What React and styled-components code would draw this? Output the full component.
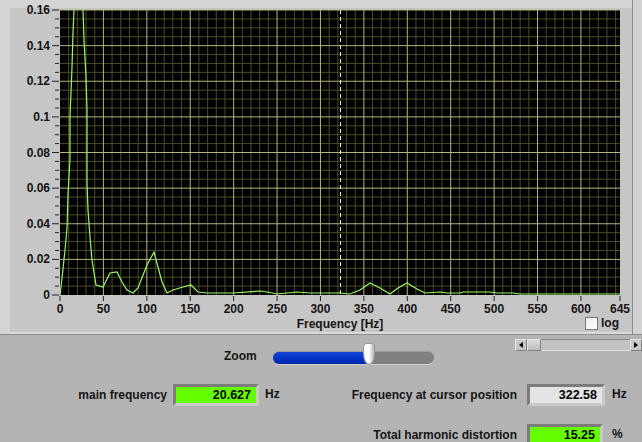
import React from "react";
import styled, { createGlobalStyle } from "styled-components";

const PL = 60;
const PT = 10;
const PW = 560;
const PH = 285;
const FMAX = 645;
const VMAX = 0.16;

const xAt = (hz) => PL + (hz / FMAX) * PW;
const yAt = (v) => PT + PH - (v / VMAX) * PH;

// spectrum trace, picked off the reference in pixel coordinates
const trace = [
  [60, 295], [62, 278], [65, 250], [67, 228], [68, 195], [70, 158], [70, 117],
  [72, 67], [73, 33], [74, 10], [78, -120], [83, 10], [84, 40], [86, 77],
  [87, 110], [87, 183], [88, 210], [90, 237], [92, 260], [96, 285], [103, 287],
  [110, 273], [117, 272], [122, 282], [127, 290], [133, 293], [138, 288],
  [147, 265], [154, 252], [158, 267], [162, 282], [167, 293], [173, 290],
  [183, 287], [191, 285], [198, 292], [207, 293], [233, 293], [260, 291],
  [267, 292], [277, 294], [297, 292], [310, 293], [333, 293], [340, 293],
  [350, 294], [360, 290], [370, 283], [380, 288], [390, 294], [398, 288],
  [407, 283], [417, 289], [425, 293], [440, 292], [447, 293], [460, 293],
  [463, 292], [490, 292], [497, 293], [513, 293], [520, 294], [620, 294],
];

const GlobalStyle = createGlobalStyle`
  html, body {
    margin: 0;
    padding: 0;
    background: #b4b4b4;
    overflow: hidden;
  }
  body {
    font-family: "Liberation Sans", Arial, sans-serif;
    font-weight: bold;
    font-size: 12px;
    color: #141414;
  }
`;

const Screen = styled.div`
  width: 642px;
  height: 442px;
  display: flex;
  flex-direction: column;
  overflow: hidden;
`;

const TopArea = styled.div`
  display: flex;
  background: #d2d2d2;
  box-shadow: 0 1px 0 #8c8c8c;
`;

const GraphPanel = styled.div`
  width: 632px;
  height: 334px;
  flex-shrink: 0;
  display: flex;
  flex-direction: column;
  background: #c6c6c6;
  border-right: 1px solid #8c8c8c;
  box-shadow: inset 10px 8px 0 #d4d4d4, inset 0 -2px 0 #dadada;
`;

const ChartSvg = styled.svg`
  display: block;
  overflow: visible;
  font-family: "Liberation Sans", Arial, sans-serif;
  font-weight: bold;
  font-size: 12px;
`;

const ChartFooter = styled.div`
  display: grid;
  grid-template-columns: 60px 525px 35px 12px;
  height: 17px;
`;

const AxisTitle = styled.div`
  grid-column: 2 / 4;
  grid-row: 1;
  text-align: center;
  line-height: 17px;
`;

const LogToggle = styled.label`
  grid-column: 3 / 5;
  grid-row: 1;
  display: flex;
  align-items: center;
  gap: 3px;
  margin-top: -3px;
`;

const CheckBox = styled.span`
  width: 11px;
  height: 11px;
  border: 1px solid #7a7a7a;
  background: linear-gradient(135deg, #e8ecf2, #ffffff);
`;

const ControlsRow = styled.div`
  display: flex;
  align-items: flex-start;
  height: 33px;
`;

const ZoomGroup = styled.div`
  display: flex;
  align-items: center;
  gap: 16px;
  margin: 11px 0 0 224px;
  height: 21px;
`;

const SliderTrack = styled.div`
  position: relative;
  width: 161px;
  height: 12px;
  margin-top: 4px;
  border-radius: 6px;
  background: #808080;
  box-shadow: 0 1px 0 #d0d0d0, 0 -1px 0 #9a9a9a;
`;

const SliderFill = styled.div`
  height: 100%;
  border-radius: 6px 0 0 6px;
  background: linear-gradient(#1446d8, #0030c0 60%, #0028a8);
`;

const SliderThumb = styled.div`
  position: absolute;
  top: -8px;
  width: 10px;
  height: 20px;
  margin-left: -5px;
  border-radius: 3px 3px 5px 5px / 3px 3px 10px 10px;
  background: linear-gradient(90deg, #f4f4f4, #ffffff 50%, #b8b8b8);
  box-shadow: 0 0 0 1px #9a9a9a;
`;

const ScrollBar = styled.div`
  display: flex;
  margin: 5px 0 0 auto;
  width: 127px;
  height: 12px;
`;

const ScrollButton = styled.div`
  width: 12px;
  height: 12px;
  box-sizing: border-box;
  display: flex;
  align-items: center;
  justify-content: center;
  background: #c8c8c8;
  border: 1px solid;
  border-color: #e6e6e6 #808080 #808080 #e6e6e6;
`;

const Arrow = styled.span`
  width: 0;
  height: 0;
  border-top: 3px solid transparent;
  border-bottom: 3px solid transparent;
  ${(p) =>
    p.$dir === "left"
      ? "border-right: 4px solid #000;"
      : "border-left: 4px solid #000;"}
`;

const ScrollThumb = styled(ScrollButton)`
  width: 14px;
  background: linear-gradient(#dcdcdc, #bcbcbc);
`;

const ScrollTrack = styled.div`
  flex: 1;
  box-sizing: border-box;
  background: #c2c2c2;
  border-top: 1px solid #8a8a8a;
  border-bottom: 1px solid #e0e0e0;
`;

const Readouts = styled.div`
  display: grid;
  grid-template-columns: 330px 1fr;
  row-gap: 18px;
  margin-top: 18px;
`;

const Readout = styled.div`
  grid-column: ${(p) => p.$col};
  display: flex;
  align-items: center;
`;

const ReadoutLabel = styled.span`
  width: ${(p) => p.$w}px;
  text-align: right;
  white-space: nowrap;
`;

const ValueBox = styled.div`
  box-sizing: border-box;
  width: ${(p) => p.$w}px;
  height: 22px;
  margin-left: ${(p) => p.$gap}px;
  padding-right: 5px;
  text-align: right;
  line-height: 16px;
  font-size: 12.5px;
  color: #000;
  background: ${(p) => (p.$lit ? "#66ff00" : "#e4e4e4")};
  border: 3px solid;
  border-color: #7c7c7c #cacaca #cacaca #7c7c7c;
`;

const Unit = styled.span`
  margin-left: ${(p) => p.$gap}px;
  margin-top: -2px;
`;

function Spectrum() {
  const minorX = [];
  for (let hz = 10; hz < FMAX; hz += 10) if (hz % 50) minorX.push(hz);
  const majorX = [];
  for (let hz = 50; hz <= 600; hz += 50) majorX.push(hz);
  const minorY = [];
  for (let i = 1; i < 32; i++) if (i % 4) minorY.push(i * 0.005);
  const majorY = [];
  for (let i = 1; i <= 8; i++) majorY.push(i * 0.02);
  const xLabels = [...majorX.map((h) => [h, String(h)]), [0, "0"], [645, "645"]];
  const yLabels = ["0", "0.02", "0.04", "0.06", "0.08", "0.1", "0.12", "0.14", "0.16"];

  return (
    <ChartSvg width="632" height="316">
      <defs>
        <clipPath id="plot">
          <rect x={PL} y={PT} width={PW} height={PH} />
        </clipPath>
      </defs>
      <rect x={PL} y={PT} width={PW} height={PH} fill="#000" />
      <g stroke="#4c4c26" strokeWidth="1">
        {minorX.map((h) => (
          <line key={h} x1={xAt(h)} x2={xAt(h)} y1={PT} y2={PT + PH} />
        ))}
        {minorY.map((v) => (
          <line key={v} x1={PL} x2={PL + PW} y1={yAt(v)} y2={yAt(v)} />
        ))}
      </g>
      <g stroke="#b4b47c" strokeWidth="1">
        {majorX.map((h) => (
          <line key={h} x1={xAt(h)} x2={xAt(h)} y1={PT} y2={PT + PH} />
        ))}
        {majorY.map((v) => (
          <line key={v} x1={PL} x2={PL + PW} y1={yAt(v)} y2={yAt(v)} />
        ))}
      </g>
      <line
        x1="340.5"
        x2="340.5"
        y1={PT}
        y2={PT + PH}
        stroke="#f2f2c8"
        strokeDasharray="4 3"
      />
      <polyline
        clipPath="url(#plot)"
        points={trace.map((p) => p.join(",")).join(" ")}
        fill="none"
        stroke="#9cf566"
        strokeWidth="1.2"
      />
      <g stroke="#222" strokeWidth="1">
        {yLabels.map((t, i) => (
          <line key={t} x1="52" x2={PL - 1} y1={yAt(i * 0.02)} y2={yAt(i * 0.02)} />
        ))}
        {minorY.map((v) => (
          <line key={v} x1="55" x2={PL - 1} y1={yAt(v)} y2={yAt(v)} />
        ))}
        {xLabels.map(([h]) => (
          <line key={h} x1={xAt(h)} x2={xAt(h)} y1={PT + PH + 1} y2={PT + PH + 6} />
        ))}
      </g>
      <g fill="#141414">
        {yLabels.map((t, i) => (
          <text key={t} x="50" y={yAt(i * 0.02) + 4} textAnchor="end">
            {t}
          </text>
        ))}
        {xLabels.map(([h, t]) => (
          <text key={t} x={xAt(h)} y="313" textAnchor="middle">
            {t}
          </text>
        ))}
      </g>
    </ChartSvg>
  );
}

export default function App() {
  return (
    <Screen>
      <GlobalStyle />
      <TopArea>
        <GraphPanel>
          <Spectrum />
          <ChartFooter>
            <AxisTitle>Frequency [Hz]</AxisTitle>
            <LogToggle>
              <CheckBox />
              log
            </LogToggle>
          </ChartFooter>
        </GraphPanel>
      </TopArea>

      <ControlsRow>
        <ZoomGroup>
          <span>Zoom</span>
          <SliderTrack>
            <SliderFill style={{ width: "60%" }} />
            <SliderThumb style={{ left: "60%" }} />
          </SliderTrack>
        </ZoomGroup>
        <ScrollBar>
          <ScrollButton>
            <Arrow $dir="left" />
          </ScrollButton>
          <ScrollThumb />
          <ScrollTrack />
          <ScrollButton>
            <Arrow $dir="right" />
          </ScrollButton>
        </ScrollBar>
      </ControlsRow>

      <Readouts>
        <Readout $col="1">
          <ReadoutLabel $w={167}>main frequency</ReadoutLabel>
          <ValueBox $w={86} $gap={6} $lit>
            20.627
          </ValueBox>
          <Unit $gap={6}>Hz</Unit>
        </Readout>
        <Readout $col="2">
          <ReadoutLabel $w={187}>Frequency at cursor position</ReadoutLabel>
          <ValueBox $w={78} $gap={10}>322.58</ValueBox>
          <Unit $gap={7}>Hz</Unit>
        </Readout>
        <Readout $col="2">
          <ReadoutLabel $w={187}>Total harmonic distortion</ReadoutLabel>
          <ValueBox $w={76} $gap={10} $lit>
            15.25
          </ValueBox>
          <Unit $gap={9}>%</Unit>
        </Readout>
      </Readouts>
    </Screen>
  );
}
